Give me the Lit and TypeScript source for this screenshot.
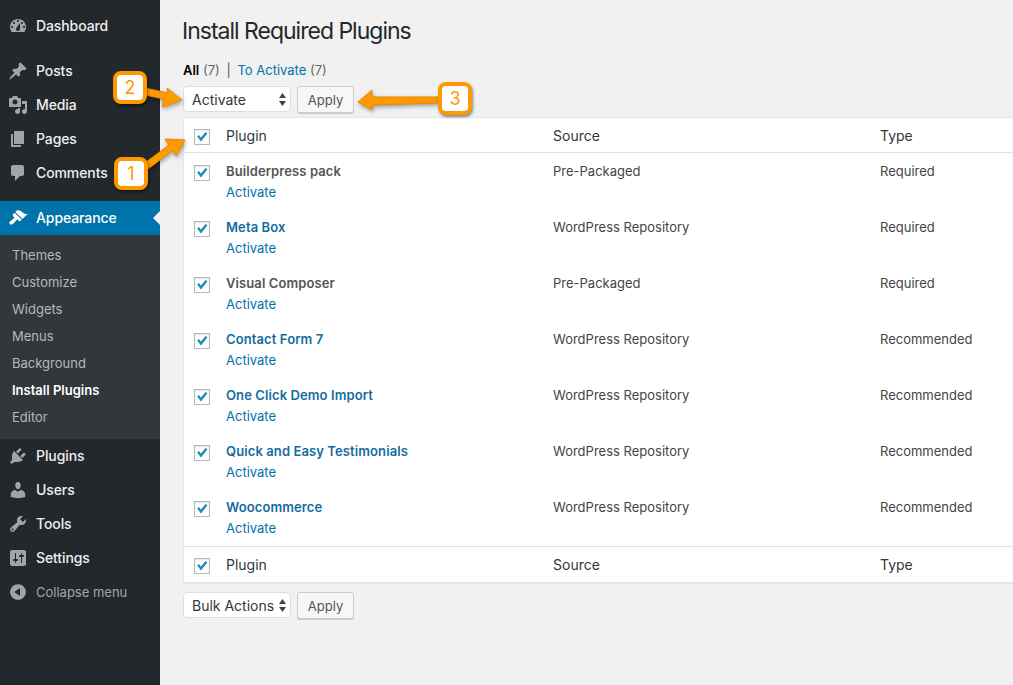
import { LitElement, html, css, svg } from 'lit';
import { customElement } from 'lit/decorators.js';

const ICONS: Record<string, string> = {
  dashboard: 'M3.76 16h12.48c1.1-1.37 1.76-3.11 1.76-5 0-4.42-3.58-8-8-8s-8 3.58-8 8c0 1.89.66 3.63 1.76 5zM10 4c.55 0 1 .45 1 1s-.45 1-1 1-1-.45-1-1 .45-1 1-1zM6 6c.55 0 1 .45 1 1s-.45 1-1 1-1-.45-1-1 .45-1 1-1zm8 0c.55 0 1 .45 1 1s-.45 1-1 1-1-.45-1-1 .45-1 1-1zm-5.37 5.55L12 7v6c0 1.1-.9 2-2 2s-2-.9-2-2c0-.57.24-1.08.63-1.45zM4 10c.55 0 1 .45 1 1s-.45 1-1 1-1-.45-1-1 .45-1 1-1zm12 0c.55 0 1 .45 1 1s-.45 1-1 1-1-.45-1-1 .45-1 1-1z',
  post: 'M10.44 3.02l1.82-1.82 6.36 6.35-1.83 1.82c-1.05-.68-2.48-.57-3.41.36l-.75.75c-.92.93-1.04 2.35-.35 3.41l-1.83 1.82-2.41-2.41-2.8 2.79c-.42.42-3.38 2.71-3.8 2.29s1.86-3.39 2.28-3.81l2.79-2.79L4.1 9.36l1.83-1.82c1.05.69 2.48.57 3.4-.36l.75-.75c.93-.92 1.05-2.35.36-3.41z',
  media: 'M13 11V4c0-.55-.45-1-1-1h-1.67L9 1H5L3.67 3H2c-.55 0-1 .45-1 1v7c0 .55.45 1 1 1h10c.55 0 1-.45 1-1zM7 4.5c1.38 0 2.5 1.12 2.5 2.5S8.38 9.5 7 9.5 4.5 8.38 4.5 7 5.62 4.5 7 4.5zM14 6h5v10.5c0 1.38-1.12 2.5-2.5 2.5S14 17.88 14 16.5s1.12-2.5 2.5-2.5c.17 0 .34.02.5.05V9h-3V6zm-4 8.05V13h2v3.5c0 1.38-1.12 2.5-2.5 2.5S7 17.88 7 16.5 8.12 14 9.5 14c.17 0 .34.02.5.05z',
  page: 'M6 15V2h10v13H6zm-1 1h8v2H3V5h2v11z',
  comments: 'M5 2h9c1.1 0 2 .9 2 2v7c0 1.1-.9 2-2 2h-2l-5 5v-5H5c-1.1 0-2-.9-2-2V4c0-1.1.9-2 2-2z',
  appearance: 'M14.48 11.06L7.41 3.99l1.5-1.5c.5-.56 2.3-.47 3.51.32 1.21.8 1.43 1.28 2.91 2.1 1.18.64 2.45 1.26 4.45.85zm-.71.71L6.7 4.7 4.93 6.47c-.39.39-.39 1.02 0 1.41l1.06 1.06c.39.39.39 1.03 0 1.42-.6.6-1.43 1.11-2.21 1.69-.35.26-.7.53-1.01.84C1.43 13.23.65 14.8 1.87 16s2.79.43 4.14-.9c.31-.31.58-.65.84-1.01.58-.78 1.09-1.61 1.69-2.21.39-.39 1.03-.39 1.42 0l1.06 1.06c.39.39 1.02.39 1.41 0z',
  plugins: 'M13.11 4.36L9.87 7.6 8 5.73l3.24-3.24c.35-.34 1.05-.2 1.56.32.52.51.66 1.21.31 1.55zm-8 1.77l.91-1.12 9.01 9.01-1.19.84c-.71.71-2.63 1.16-3.82 1.16H6.14L4.9 17.26c-.59.59-1.54.59-2.12 0-.59-.58-.59-1.53 0-2.12l1.24-1.24v-3.88c0-1.13.4-3.19 1.09-3.89zm7.26 3.97l3.24-3.24c.34-.35 1.04-.21 1.55.31.52.51.66 1.21.31 1.55l-3.24 3.25z',
  users: 'M10 9.25c-2.27 0-2.73-3.44-2.73-3.44C7 4.02 7.82 2 9.97 2c2.16 0 2.98 2.02 2.71 3.81 0 0-.41 3.44-2.68 3.44zm0 2.57L12.72 10c2.39 0 4.52 2.33 4.52 4.53v2.49s-3.65 1.13-7.24 1.13c-3.65 0-7.24-1.13-7.24-1.13v-2.49c0-2.25 1.94-4.48 4.47-4.48z',
  tools: 'M16.68 9.77c-1.34 1.34-3.3 1.67-4.95.99l-5.41 6.52c-.99.99-2.59.99-3.58 0s-.99-2.59 0-3.57l6.52-5.42c-.68-1.65-.35-3.61.99-4.95 1.28-1.28 3.12-1.62 4.72-1.06l-2.89 2.89 2.82 2.82 2.86-2.87c.53 1.58.18 3.39-1.08 4.65zM3.81 16.21c.4.39 1.04.39 1.43 0 .4-.4.4-1.04 0-1.43-.39-.4-1.03-.4-1.43 0-.39.39-.39 1.03 0 1.43z',
  settings: 'M18 16V4c0-1.1-.9-2-2-2H4c-1.1 0-2 .9-2 2v12c0 1.1.9 2 2 2h12c1.1 0 2-.9 2-2zM8 11h1c.55 0 1 .45 1 1s-.45 1-1 1H8v1.5c0 .28-.22.5-.5.5s-.5-.22-.5-.5V13H6c-.55 0-1-.45-1-1s.45-1 1-1h1V5.5c0-.28.22-.5.5-.5s.5.22.5.5V11zm5-2h-1c-.55 0-1-.45-1-1s.45-1 1-1h1V5.5c0-.28.22-.5.5-.5s.5.22.5.5V7h1c.55 0 1 .45 1 1s-.45 1-1 1h-1v5.5c0 .28-.22.5-.5.5s-.5-.22-.5-.5V9z',
  collapse: 'M10 2.16c4.33 0 7.84 3.51 7.84 7.84s-3.51 7.84-7.84 7.84S2.16 14.33 2.16 10 5.71 2.16 10 2.16zm2 11.72V6.12L6.18 9.97z',
};

const PLUGINS = [
  { name: 'Builderpress pack', source: 'Pre-Packaged', type: 'Required', link: false },
  { name: 'Meta Box', source: 'WordPress Repository', type: 'Required', link: true },
  { name: 'Visual Composer', source: 'Pre-Packaged', type: 'Required', link: false },
  { name: 'Contact Form 7', source: 'WordPress Repository', type: 'Recommended', link: true },
  { name: 'One Click Demo Import', source: 'WordPress Repository', type: 'Recommended', link: true },
  { name: 'Quick and Easy Testimonials', source: 'WordPress Repository', type: 'Recommended', link: true },
  { name: 'Woocommerce', source: 'WordPress Repository', type: 'Recommended', link: true },
];

const SUBMENU = ['Themes', 'Customize', 'Widgets', 'Menus', 'Background', 'Install Plugins', 'Editor'];

@customElement('app-root')
export class AppRoot extends LitElement {
  static styles = css`
    :host {
      display: block;
      position: relative;
      width: 1013px;
      height: 685px;
      overflow: hidden;
      background: #f1f1f1;
      font-family: Inter, "Liberation Sans", sans-serif;
      font-size: 13px;
      color: #444;
    }
    .page { display: flex; height: 685px; }

    /* sidebar */
    .side { width: 160px; flex: none; background: #23282d; padding-top: 9px; box-sizing: border-box; }
    .item {
      display: flex;
      align-items: center;
      height: 34px;
      color: #eee;
      font-size: 14px;
      font-weight: 500;
      letter-spacing: -.1px;
      position: relative;
    }
    .item span { padding-bottom: 2px; }
    .item svg { width: 20px; height: 20px; margin: 0 8px; fill: #a0a5aa; flex: none; }
    .group { margin-top: 11px; }
    .item.active { background: #0073aa; color: #fff; margin-top: 11px; }
    .item.active svg { fill: #fff; }
    .item.active::after {
      content: "";
      position: absolute;
      right: 0;
      top: 10px;
      border: 7px solid transparent;
      border-right-color: #f1f1f1;
      border-left: 0;
    }
    .item.muted { color: #a0a5aa; font-size: 13px; font-weight: 400; letter-spacing: 0; }
    .item.muted span { padding-bottom: 0; }
    .sub { background: #32373c; padding: 7px 0 8px; }
    .sub div { height: 27px; line-height: 27px; padding-left: 12px; color: #b4b9be; }
    .sub div.on { color: #fff; font-weight: 600; }

    /* main column */
    .main { flex: 1; min-width: 0; padding: 0 0 0 23px; }
    h1 { margin: 0 0 0 -1px; padding-top: 17px; height: 44px; font-size: 23px; line-height: 28px; letter-spacing: -1px; font-weight: 400; color: #23282d; }
    .views { height: 25px; line-height: 18px; color: #666; }
    .views b { color: #000; font-weight: 600; }
    .views a { color: #0073aa; text-decoration: none; }
    .views .sep { color: #555; margin: 0 3px; }
    .bar { display: flex; gap: 6px; height: 31px; }
    .bar.bottom { margin-top: 9px; }
    .select {
      height: 26px;
      box-sizing: border-box;
      width: 108px;
      background: #fff;
      border: 1px solid #ddd;
      border-radius: 4px;
      color: #32373c;
      font-size: 14px;
      display: flex;
      align-items: center;
      justify-content: space-between;
      padding: 1px 4px 0 8px;
    }
    .select svg { width: 7px; height: 13px; fill: #444; }
    .btn {
      height: 27px;
      width: 57px;
      box-sizing: border-box;
      background: #f7f7f7;
      border: 1px solid #ccc;
      border-radius: 3px;
      box-shadow: 0 1px 0 #ccc;
      color: #555;
      display: flex;
      align-items: center;
      justify-content: center;
    }

    /* table */
    .table { background: #fff; border: 1px solid #e5e5e5; border-right: 0; box-shadow: 0 1px 1px rgba(0,0,0,.04); }
    .row { display: grid; grid-template-columns: 42px 327px 327px 1fr; }
    .head { align-items: center; font-size: 14px; color: #32373c; }
    .head.top { height: 34px; border-bottom: 1px solid #e1e1e1; }
    .head.foot { height: 35px; border-top: 1px solid #e1e1e1; }
    .head .cb { padding-top: 3px; }
    .body { padding-top: 1px; }
    .plugin { height: 56px; }
    .plugin > div { padding-top: 7px; line-height: 20px; }
    .cb { padding-left: 10px; display: flex; align-items: center; }
    .plugin .cb { padding-top: 11px; align-items: flex-start; }
    .box { width: 16px; height: 16px; border: 1px solid #b4b9be; box-sizing: border-box; background: #fff; box-shadow: inset 0 1px 2px rgba(0,0,0,.1); display: block; }
    .box svg { width: 14px; height: 14px; display: block; fill: #1e8cbe; }
    .name { font-weight: 600; color: #555; letter-spacing: .1px; }
    .name.link { color: #146ca0; }
    .act { color: #0073aa; margin-top: 1px; }

    /* callouts */
    .arrows { position: absolute; inset: 0; width: 1013px; height: 685px; pointer-events: none; filter: drop-shadow(1px 2px 2px rgba(0,0,0,.35)); }
    .badge {
      position: absolute;
      width: 34px;
      height: 33px;
      box-sizing: border-box;
      background: #fff;
      border: 4px solid #ff9900;
      border-radius: 8px;
      box-shadow: 1px 2px 3px rgba(0,0,0,.45);
      color: #ff9900;
      font-size: 18px;
      display: flex;
      align-items: center;
      justify-content: center;
    }
  `;

  icon(name: string) {
    return html`<svg viewBox="0 0 20 20"><path d=${ICONS[name]}></path></svg>`;
  }

  check() {
    return html`<span class="box"><svg viewBox="0 0 14 14"><path d="M2.2 6.6l1.7-1.5 2 2.3L10.6 2 12.4 3.4 6 11.4z"></path></svg></span>`;
  }

  menuItem(label: string, icon: string, cls = '') {
    return html`<div class="item ${cls}">${this.icon(icon)}<span>${label}</span></div>`;
  }

  select(label: string) {
    return html`<div class="select">${label}<svg viewBox="0 0 7 13"><path d="M3.5 0L7 5H0zM3.5 13L0 8h7z"></path></svg></div>`;
  }

  headRow(cls: string) {
    return html`<div class="row head ${cls}">
      <div class="cb">${this.check()}</div><div>Plugin</div><div>Source</div><div>Type</div>
    </div>`;
  }

  render() {
    return html`
      <div class="page">
        <nav class="side">
          ${this.menuItem('Dashboard', 'dashboard')}
          <div class="group">
            ${this.menuItem('Posts', 'post')}
            ${this.menuItem('Media', 'media')}
            ${this.menuItem('Pages', 'page')}
            ${this.menuItem('Comments', 'comments')}
          </div>
          ${this.menuItem('Appearance', 'appearance', 'active')}
          <div class="sub">
            ${SUBMENU.map((s) => html`<div class=${s === 'Install Plugins' ? 'on' : ''}>${s}</div>`)}
          </div>
          ${this.menuItem('Plugins', 'plugins')}
          ${this.menuItem('Users', 'users')}
          ${this.menuItem('Tools', 'tools')}
          ${this.menuItem('Settings', 'settings')}
          ${this.menuItem('Collapse menu', 'collapse', 'muted')}
        </nav>
        <main class="main">
          <h1>Install Required Plugins</h1>
          <div class="views"><b>All</b> (7) <span class="sep">|</span> <a>To Activate</a> (7)</div>
          <div class="bar">${this.select('Activate')}<div class="btn">Apply</div></div>
          <div class="table">
            ${this.headRow('top')}
            <div class="body">
              ${PLUGINS.map((p) => html`
                <div class="row plugin">
                  <div class="cb">${this.check()}</div>
                  <div>
                    <div class="name ${p.link ? 'link' : ''}">${p.name}</div>
                    <div class="act">Activate</div>
                  </div>
                  <div>${p.source}</div>
                  <div>${p.type}</div>
                </div>
              `)}
            </div>
            ${this.headRow('foot')}
          </div>
          <div class="bar bottom">${this.select('Bulk Actions')}<div class="btn">Apply</div></div>
        </main>
      </div>
      <svg class="arrows" viewBox="0 0 1013 685">
        ${svg`
          <g fill="#ff9900" stroke="#e98a00" stroke-width="1" stroke-linejoin="round">
            <polygon points="185,140 176,156 173,150 148,169 146,162 169,145 165,139"></polygon>
            <polygon points="182,100 162,107 164,99 145,95 145,88 168,93 167,88"></polygon>
            <polygon points="358,102 372,90 372,97 438,97 438,103 372,105 372,110"></polygon>
          </g>
        `}
      </svg>
      <div class="badge" style="left:114px;top:157px">1</div>
      <div class="badge" style="left:113px;top:71px">2</div>
      <div class="badge" style="left:438px;top:82px">3</div>
    `;
  }
}
